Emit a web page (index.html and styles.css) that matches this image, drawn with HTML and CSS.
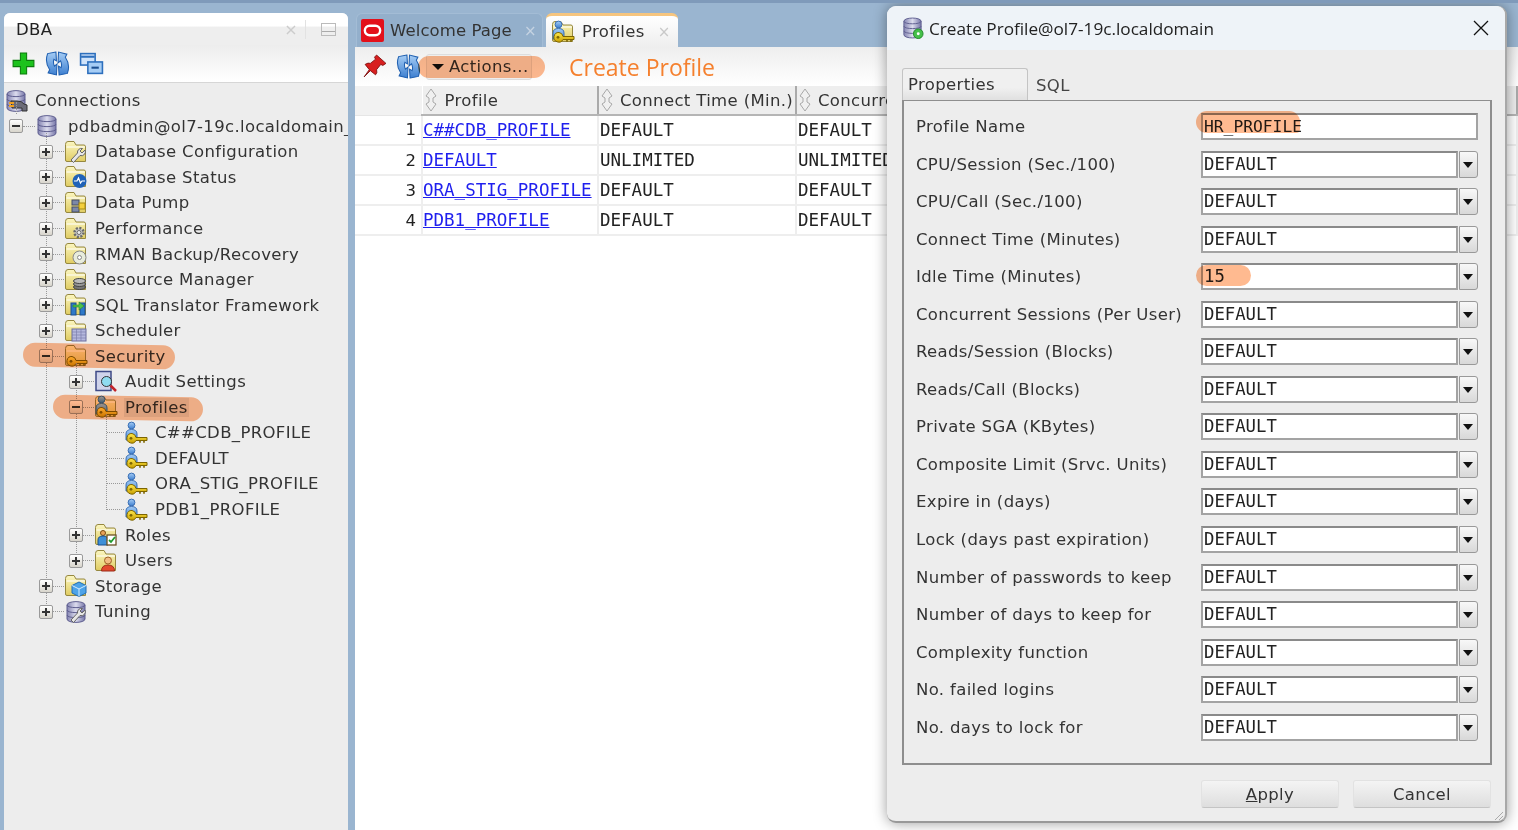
FILE: index.html
```html
<!DOCTYPE html>
<html lang="en">
<head>
    <meta charset="UTF-8">
    <meta name="viewport" content="width=device-width, initial-scale=1.0">
    <title>Create Profile</title>
    <link rel="stylesheet" href="styles.css">
</head>
<body>
    <svg class="defs" aria-hidden="true">
        <defs>
            <linearGradient id="g-folder" x1="0" y1="0" x2="0" y2="1"><stop offset="0" stop-color="#fbf6c0"/><stop offset="1" stop-color="#e0cc62"/></linearGradient>
            <linearGradient id="g-db" x1="0" y1="0" x2="1" y2="0"><stop offset="0" stop-color="#8484b2"/><stop offset=".5" stop-color="#dcdcee"/><stop offset="1" stop-color="#7676a8"/></linearGradient>
            <linearGradient id="g-blue" x1="0" y1="0" x2="0" y2="1"><stop offset="0" stop-color="#a6cdf5"/><stop offset="1" stop-color="#3d7fd0"/></linearGradient>
            <linearGradient id="g-key" x1="0" y1="0" x2="0" y2="1"><stop offset="0" stop-color="#ffe94d"/><stop offset="1" stop-color="#c9a000"/></linearGradient>
            <symbol id="folder" viewBox="0 0 24 24"><path d="M1.500 4.500Q1.500 1.500 4 1.500H10L12 5H20Q21.500 5 21.500 7V21.500H3Q1.500 21.500 1.500 20Z" fill="url(#g-folder)" stroke="#968840"/><path d="M2.500 7H21" stroke="#fff" fill="none"/></symbol>
            <symbol id="key" viewBox="0 0 24 24"><path d="M8 12.500a4.800 4.800 0 1 0 4 7H23v-3H12A4.800 4.800 0 0 0 8 12.500Z" fill="url(#g-key)" stroke="#7d6500"/><circle cx="7" cy="17.300" r="1.400" fill="#7d6500"/><path d="M16 19.500v2.300M20 19.500v2.300" stroke="#7d6500" stroke-width="1.600"/></symbol>
            <symbol id="person" viewBox="0 0 24 24"><circle cx="7.500" cy="4.500" r="3.400" fill="url(#g-blue)" stroke="#3a6fb5"/><path d="M2 19V13Q2 8.500 7.500 8.500T13 13V19Z" fill="url(#g-blue)" stroke="#3a6fb5"/></symbol>
            <symbol id="db" viewBox="0 0 24 24"><path d="M3 5C3 .5 21 .5 21 5V19C21 23.500 3 23.500 3 19Z" fill="url(#g-db)" stroke="#5f5f90"/><path d="M3 5C3 8.500 21 8.500 21 5M3 10C3 13.500 21 13.500 21 10M3 15C3 18.500 21 18.500 21 15" fill="none" stroke="#5f5f90"/></symbol>
            <symbol id="plug" viewBox="0 0 24 24"><path d="M7 12h6q5 0 7 3l3 1v6h-5v-3H8Z" fill="#6b6b78" stroke="#333"/><path d="M5 14h5M5 17h5" stroke="#f0a020" stroke-width="2"/></symbol>
            <symbol id="wrench" viewBox="0 0 24 24"><path d="M21 10l-3 3-2-2 2.500-2.500A4 4 0 0 0 13.500 13L7 20l2.500 2.500 6.500-7A4 4 0 0 0 21 10Z" fill="#e6e6e6" stroke="#666"/></symbol>
            <symbol id="pulse" viewBox="0 0 24 24"><circle cx="15.500" cy="16" r="7" fill="#1f62b8"/><path d="M10 16h3l1.500-3 2 5 1.500-2h3" fill="none" stroke="#fff" stroke-width="1.200"/></symbol>
            <symbol id="pump" viewBox="0 0 24 24"><rect x="8" y="9" width="7" height="5" fill="#7c88a8" stroke="#444c66"/><rect x="8" y="16" width="7" height="5" fill="#7c88a8" stroke="#444c66"/><rect x="15" y="12" width="6" height="6" fill="#f4cf3c" stroke="#a88a12"/></symbol>
            <symbol id="gear" viewBox="0 0 24 24"><circle cx="15" cy="15.500" r="4.500" fill="#c9c9c9" stroke="#6a6a6a" stroke-width="2.500" stroke-dasharray="2 1.500"/><circle cx="15" cy="15.500" r="2" fill="#eee" stroke="#6a6a6a"/></symbol>
            <symbol id="disc" viewBox="0 0 24 24"><circle cx="15.500" cy="15.500" r="6.500" fill="#e8ecdc" stroke="#888"/><circle cx="15.500" cy="15.500" r="2" fill="#fff" stroke="#888"/></symbol>
            <symbol id="stack" viewBox="0 0 24 24"><ellipse cx="15.500" cy="19" rx="6" ry="2.500" fill="#777" stroke="#444"/><ellipse cx="15.500" cy="16" rx="6" ry="2.500" fill="#999" stroke="#444"/><ellipse cx="15.500" cy="13" rx="6" ry="2.500" fill="#bbb" stroke="#444"/></symbol>
            <symbol id="translate" viewBox="0 0 24 24"><rect x="7" y="10" width="5" height="12" fill="#2e79c9" stroke="#1b4f8f"/><rect x="16" y="10" width="5" height="12" fill="#2e79c9" stroke="#1b4f8f"/><path d="M9 12h6V9l5 4-5 4v-3H9Z" fill="#4fc24a" stroke="#2c8a2a" stroke-width=".6"/></symbol>
            <symbol id="calendar" viewBox="0 0 24 24"><rect x="8" y="10" width="14" height="12" fill="#b5b8de" stroke="#6c6f9e"/><path d="M8 13h14M8 16h14M8 19h14M12.500 10v12M17 10v12" stroke="#7d80ad" stroke-width=".7"/></symbol>
            <symbol id="audit" viewBox="0 0 24 24"><rect x="2" y="1.500" width="15" height="19" fill="#cfd3ea" stroke="#3e4a86" stroke-width="1.500"/><circle cx="12.500" cy="11.500" r="5" fill="#8fdcf0" stroke="#333"/><path d="M16.500 15.500l5.500 5.500" stroke="#c3242a" stroke-width="2.500"/></symbol>
            <symbol id="roles" viewBox="0 0 24 24"><circle cx="9" cy="10" r="2.500" fill="#e8a35a" stroke="#7c4a12"/><path d="M4 22v-5q0-4 5-4t5 4v5Z" fill="#3d8fd8" stroke="#1b4f8f"/><rect x="13" y="12" width="9" height="10" fill="#fff" stroke="#6b5224" stroke-width="1.300"/><path d="M15 17l2 2 4-5" fill="none" stroke="#1f9a2c" stroke-width="1.800"/></symbol>
            <symbol id="user" viewBox="0 0 24 24"><circle cx="14" cy="11.500" r="3.500" fill="#f2bd84" stroke="#a0622a"/><path d="M7.500 22q0-6 6.500-6t6.500 6Z" fill="#e2492f" stroke="#9c2b16"/></symbol>
            <symbol id="cube" viewBox="0 0 24 24"><path d="M15 8l7 3.500V19l-7 3.500L8 19v-7.500Z" fill="#4da3e8" stroke="#1f6cb5"/><path d="M8 11.500l7 3.500 7-3.500M15 15v7.500" fill="none" stroke="#d4ecff"/></symbol>
            <symbol id="refresh" viewBox="0 0 24 24"><path d="M10.500 1L2.500 2.500Q-.5 11 4.500 18L3 21L11 23L11.500 12.500L9 14.500Q7.500 11 8.500 8L11 9.500Z" fill="url(#g-blue)" stroke="#1f5fb0"/><path d="M13.500 23L21.500 21.500Q24.500 13 19.500 6L21 3L13 1L12.500 11.500L15 9.500Q16.500 13 15.500 16L13 14.500Z" fill="url(#g-blue)" stroke="#1f5fb0"/></symbol>
            <symbol id="sort" viewBox="0 0 12 24"><path d="M6 1L11 8L8 10V14L11 16L6 23L1 16L4 14V10L1 8Z" fill="#f0f0f0" stroke="#a8a8a8"/></symbol>
        </defs>
    </svg>

    <div class="app">
        <aside class="dba">
            <div class="dba-title">
                <span>DBA</span>
                <span class="dba-close">×</span>
                <span class="dba-min"></span>
            </div>
            <div class="dba-tools">
                <svg class="tool" viewBox="0 0 24 24"><path d="M9 2h6v7h7v6h-7v7H9v-7H2V9h7Z" fill="#1cc21c" stroke="#0a7a0a"/></svg>
                <svg class="tool"><use href="#refresh"/></svg>
                <svg class="tool" viewBox="0 0 24 24"><rect x="1.500" y="2.500" width="14" height="11" fill="#cfe3fa" stroke="#2d6fbd" stroke-width="1.500"/><path d="M2 5.500h13" stroke="#2d6fbd" stroke-width="2"/><rect x="8.500" y="10.500" width="14" height="11" fill="#a6cdf5" stroke="#2d6fbd" stroke-width="1.500"/><path d="M12 16h7" stroke="#1b4f8f" stroke-width="2"/></svg>
            </div>
            <div class="tree">
                <div class="row root"><svg class="ico"><use href="#db"/><use href="#plug"/></svg><span class="name">Connections</span></div>
                <div class="branch b-db">
                    <div class="row db-row"><span class="twisty minus"></span><span class="stub"></span><svg class="ico"><use href="#db"/></svg><span class="name">pdbadmin@ol7-19c.localdomain_</span></div>
                    <div class="children">
                        <div class="row"><span class="twisty plus"></span><span class="stub"></span><svg class="ico"><use href="#folder"/><use href="#wrench"/></svg><span class="name">Database Configuration</span></div>
                        <div class="row"><span class="twisty plus"></span><span class="stub"></span><svg class="ico"><use href="#folder"/><use href="#pulse"/></svg><span class="name">Database Status</span></div>
                        <div class="row"><span class="twisty plus"></span><span class="stub"></span><svg class="ico"><use href="#folder"/><use href="#pump"/></svg><span class="name">Data Pump</span></div>
                        <div class="row"><span class="twisty plus"></span><span class="stub"></span><svg class="ico"><use href="#folder"/><use href="#gear"/></svg><span class="name">Performance</span></div>
                        <div class="row"><span class="twisty plus"></span><span class="stub"></span><svg class="ico"><use href="#folder"/><use href="#disc"/></svg><span class="name">RMAN Backup/Recovery</span></div>
                        <div class="row"><span class="twisty plus"></span><span class="stub"></span><svg class="ico"><use href="#folder"/><use href="#stack"/></svg><span class="name">Resource Manager</span></div>
                        <div class="row"><span class="twisty plus"></span><span class="stub"></span><svg class="ico"><use href="#folder"/><use href="#translate"/></svg><span class="name">SQL Translator Framework</span></div>
                        <div class="row"><span class="twisty plus"></span><span class="stub"></span><svg class="ico"><use href="#folder"/><use href="#calendar"/></svg><span class="name">Scheduler</span></div>
                        <div class="row"><span class="mark mark-security"></span><span class="twisty minus"></span><span class="stub"></span><svg class="ico"><use href="#folder"/><use href="#key"/></svg><span class="name">Security</span></div>
                        <div class="children">
                            <div class="row"><span class="twisty plus"></span><span class="stub"></span><svg class="ico"><use href="#audit"/></svg><span class="name">Audit Settings</span></div>
                            <div class="row"><span class="mark mark-profiles"></span><span class="twisty minus"></span><span class="stub"></span><svg class="ico"><use href="#folder"/><use href="#person"/><use href="#key"/></svg><span class="name selected">Profiles</span></div>
                            <div class="children leaves">
                                <div class="row"><span class="stub long"></span><svg class="ico"><use href="#person"/><use href="#key"/></svg><span class="name">C##CDB_PROFILE</span></div>
                                <div class="row"><span class="stub long"></span><svg class="ico"><use href="#person"/><use href="#key"/></svg><span class="name">DEFAULT</span></div>
                                <div class="row"><span class="stub long"></span><svg class="ico"><use href="#person"/><use href="#key"/></svg><span class="name">ORA_STIG_PROFILE</span></div>
                                <div class="row"><span class="stub long"></span><svg class="ico"><use href="#person"/><use href="#key"/></svg><span class="name">PDB1_PROFILE</span></div>
                            </div>
                            <div class="row"><span class="twisty plus"></span><span class="stub"></span><svg class="ico"><use href="#folder"/><use href="#roles"/></svg><span class="name">Roles</span></div>
                            <div class="row"><span class="twisty plus"></span><span class="stub"></span><svg class="ico"><use href="#folder"/><use href="#user"/></svg><span class="name">Users</span></div>
                        </div>
                        <div class="row"><span class="twisty plus"></span><span class="stub"></span><svg class="ico"><use href="#folder"/><use href="#cube"/></svg><span class="name">Storage</span></div>
                        <div class="row"><span class="twisty plus"></span><span class="stub"></span><svg class="ico"><use href="#db"/><use href="#wrench"/></svg><span class="name">Tuning</span></div>
                    </div>
                </div>
            </div>
        </aside>

        <main class="editor">
            <div class="tabs">
                <div class="tab">
                    <svg class="tab-logo" viewBox="0 0 24 24"><rect width="24" height="24" rx="2" fill="#e3101a"/><rect x="4" y="7" width="16" height="10" rx="5" fill="none" stroke="#fff" stroke-width="2.500"/></svg>
                    <span class="tab-name">Welcome Page</span><span class="tab-x">×</span>
                </div>
                <div class="tab active">
                    <svg class="ico"><use href="#folder"/><use href="#person"/><use href="#key"/></svg>
                    <span>Profiles</span><span class="tab-x">×</span>
                </div>
            </div>
            <div class="sheet">
                <div class="sheet-tools">
                    <svg class="tool pin" viewBox="0 0 24 24"><path d="M14 1l9 8-3 2-2-1-4 5q1 3-1 5l-5-4-6 6 5-7-4-5q3-2 5-1l5-4-1-2Z" fill="#d81f1f" stroke="#7a0c0c" stroke-width=".8"/></svg>
                    <svg class="tool"><use href="#refresh"/></svg>
                    <button class="actions"><span class="arrow"></span>Actions...</button>
                    <span class="mark mark-actions"></span>
                    <span class="sheet-title">Create Profile</span>
                </div>
                <table class="grid">
                    <thead>
                        <tr>
                            <th class="num"></th>
                            <th class="c1"><svg class="sort"><use href="#sort"/></svg>Profile</th>
                            <th class="c2"><svg class="sort"><use href="#sort"/></svg>Connect Time (Min.)</th>
                            <th class="c3"><svg class="sort"><use href="#sort"/></svg>Concurrent</th>
                        </tr>
                    </thead>
                    <tbody>
                        <tr><td class="num">1</td><td><a href="#">C##CDB_PROFILE</a></td><td>DEFAULT</td><td>DEFAULT</td></tr>
                        <tr><td class="num">2</td><td><a href="#">DEFAULT</a></td><td>UNLIMITED</td><td>UNLIMITED</td></tr>
                        <tr><td class="num">3</td><td><a href="#">ORA_STIG_PROFILE</a></td><td>DEFAULT</td><td>DEFAULT</td></tr>
                        <tr><td class="num">4</td><td><a href="#">PDB1_PROFILE</a></td><td>DEFAULT</td><td>DEFAULT</td></tr>
                    </tbody>
                </table>
            </div>
        </main>
    </div>

    <section class="dialog">
        <header class="dialog-head">
            <svg class="dialog-ico" viewBox="0 0 24 24"><use href="#db"/><circle cx="18" cy="18" r="5" fill="#45c04a" stroke="#238a2a"/><circle cx="18" cy="18" r="1.500" fill="#fff"/></svg>
            <span class="dialog-title">Create Profile@ol7-19c.localdomain</span>
            <svg class="dialog-close" viewBox="0 0 16 16"><path d="M1 1l14 14M15 1L1 15" stroke="#111" stroke-width="1.300" fill="none"/></svg>
        </header>
        <div class="dialog-tabs">
            <div class="dtab active">Properties</div>
            <div class="dtab">SQL</div>
        </div>
        <form class="pane">
            <div class="field"><label>Profile Name</label><div class="text"><span class="mark mark-name"></span>HR_PROFILE</div></div>
            <div class="field"><label>CPU/Session (Sec./100)</label><div class="combo"><span class="value">DEFAULT</span><span class="drop"></span></div></div>
            <div class="field"><label>CPU/Call (Sec./100)</label><div class="combo"><span class="value">DEFAULT</span><span class="drop"></span></div></div>
            <div class="field"><label>Connect Time (Minutes)</label><div class="combo"><span class="value">DEFAULT</span><span class="drop"></span></div></div>
            <div class="field"><label>Idle Time (Minutes)</label><div class="combo"><span class="mark mark-idle"></span><span class="value">15</span><span class="drop"></span></div></div>
            <div class="field"><label>Concurrent Sessions (Per User)</label><div class="combo"><span class="value">DEFAULT</span><span class="drop"></span></div></div>
            <div class="field"><label>Reads/Session (Blocks)</label><div class="combo"><span class="value">DEFAULT</span><span class="drop"></span></div></div>
            <div class="field"><label>Reads/Call (Blocks)</label><div class="combo"><span class="value">DEFAULT</span><span class="drop"></span></div></div>
            <div class="field"><label>Private SGA (KBytes)</label><div class="combo"><span class="value">DEFAULT</span><span class="drop"></span></div></div>
            <div class="field"><label>Composite Limit (Srvc. Units)</label><div class="combo"><span class="value">DEFAULT</span><span class="drop"></span></div></div>
            <div class="field"><label>Expire in (days)</label><div class="combo"><span class="value">DEFAULT</span><span class="drop"></span></div></div>
            <div class="field"><label>Lock (days past expiration)</label><div class="combo"><span class="value">DEFAULT</span><span class="drop"></span></div></div>
            <div class="field"><label>Number of passwords to keep</label><div class="combo"><span class="value">DEFAULT</span><span class="drop"></span></div></div>
            <div class="field"><label>Number of days to keep for</label><div class="combo"><span class="value">DEFAULT</span><span class="drop"></span></div></div>
            <div class="field"><label>Complexity function</label><div class="combo"><span class="value">DEFAULT</span><span class="drop"></span></div></div>
            <div class="field"><label>No. failed logins</label><div class="combo"><span class="value">DEFAULT</span><span class="drop"></span></div></div>
            <div class="field"><label>No. days to lock for</label><div class="combo"><span class="value">DEFAULT</span><span class="drop"></span></div></div>
        </form>
        <footer class="dialog-foot">
            <button class="btn"><u>A</u>pply</button>
            <button class="btn">Cancel</button>
        </footer>
        <svg class="grip" viewBox="0 0 12 12"><path d="M11 3L3 11M11 7l-4 4" stroke="#aaa" fill="none"/></svg>
    </section>
</body>
</html>
```

FILE: styles.css
```css
* {
    margin: 0;
    padding: 0;
    box-sizing: border-box;
}

body {
    width: 1518px;
    height: 830px;
    overflow: hidden;
    position: relative;
    background: #9ab5d0;
    border-top: 3px solid #7f9aba;
    font-family: 'DejaVu Sans', sans-serif;
    font-size: 16.5px;
    letter-spacing: 0.35px;
    color: #333;
}

.defs {
    position: absolute;
    width: 0;
    height: 0;
}

.app {
    display: flex;
    height: 827px;
    padding: 10px 0 0 4px;
    gap: 7px;
}

/* left panel */
.dba {
    width: 344px;
    flex-shrink: 0;
    background: #ededed;
    border-radius: 6px 6px 0 0;
}

.dba-title {
    height: 32px;
    display: flex;
    align-items: center;
    padding: 0 12px 0 12px;
    background: linear-gradient(#fff 0, #fff 40%, #eee 45%);
    border-radius: 6px 6px 0 0;
    color: #222;
}

.dba-close {
    margin-left: auto;
    color: #ccc;
    font-size: 16px;
    padding-right: 7px;
    border-right: 1px solid #e2e2e2;
}

.dba-min {
    width: 15px;
    height: 13px;
    margin-left: 15px;
    border: 1px solid #bbb;
    background: linear-gradient(transparent 60%, #aaa 60%, #aaa 70%, transparent 70%);
}

.dba-tools {
    height: 38px;
    display: flex;
    align-items: center;
    gap: 9px;
    padding: 0 0 0 7px;
    background: linear-gradient(#ededed, #fff);
    border-bottom: 1px solid #d6d6d6;
}

.tool {
    width: 25px;
    height: 25px;
    flex-shrink: 0;
}

.tree {
    padding-top: 5px;
}

.row {
    height: 25.55px;
    display: flex;
    align-items: center;
    position: relative;
    white-space: nowrap;
    padding-left: 5px;
}

.root {
    padding-left: 0;
}

.ico {
    width: 24px;
    height: 24px;
    flex-shrink: 0;
}

.name {
    margin-left: 6px;
    padding: 0 1px;
    position: relative;
}

.root .name {
    margin-left: 6px;
}

.db-row .name {
    margin-left: 8px;
    overflow: hidden;
    width: 281px;
}

.selected {
    background: #dcdcdc;
}

.twisty {
    width: 14px;
    height: 14px;
    flex-shrink: 0;
    position: relative;
    border: 1px solid #9a9a9a;
    border-radius: 2px;
    background: linear-gradient(#fff, #d8d5cc);
}

.twisty::before {
    content: "";
    position: absolute;
    left: 2px;
    right: 2px;
    top: 5px;
    height: 2px;
    background: #333;
}

.plus::after {
    content: "";
    position: absolute;
    top: 2px;
    bottom: 2px;
    left: 5px;
    width: 2px;
    background: #333;
}

.stub {
    width: 11px;
    flex-shrink: 0;
    border-top: 1px dotted #999;
}

.db-row .stub {
    width: 12px;
}

.stub.long {
    width: 17px;
}

.branch {
    position: relative;
}

.b-db::before {
    content: "";
    position: absolute;
    left: 12px;
    top: -12px;
    height: 12px;
    border-left: 1px dotted #999;
}

.children {
    margin-left: 30px;
    position: relative;
}

.children::before {
    content: "";
    position: absolute;
    left: 12px;
    top: -6px;
    bottom: 12px;
    border-left: 1px dotted #999;
}

.leaves {
    margin-left: 30px;
}

.leaves .row {
    padding-left: 13px;
}

.leaves::before {
    left: 12px;
}

/* orange highlighter strokes */
.mark {
    position: absolute;
    background: #ffba90;
    mix-blend-mode: multiply;
    border-radius: 12px;
    z-index: 2;
}

.mark-security {
    left: -11px;
    top: 1px;
    width: 152px;
    height: 24px;
    transform: rotate(1.2deg);
}

.mark-profiles {
    left: -11px;
    top: 1px;
    width: 150px;
    height: 24px;
    transform: rotate(1.2deg);
}

.mark-actions {
    left: 63px;
    top: 9px;
    width: 127px;
    height: 22px;
}

.mark-name {
    left: -7px;
    top: -4px;
    width: 104px;
    height: 22px;
    border-radius: 11px 11px 4px 11px;
}

.mark-idle {
    left: -5px;
    top: 2px;
    width: 55px;
    height: 21px;
}

/* profiles editor */
.editor {
    flex: 1;
    display: flex;
    flex-direction: column;
    min-width: 0;
}

.tabs {
    height: 34px;
    display: flex;
    gap: 3px;
    padding-left: 1px;
}

.tab {
    width: 187px;
    display: flex;
    align-items: center;
    gap: 6px;
    padding: 0 6px 0 4px;
    white-space: nowrap;
    background: #93afcb;
    border-radius: 6px 6px 0 0;
    border: 1px solid #a3bcd5;
    border-bottom: none;
}

.tab.active {
    width: 132px;
    background: linear-gradient(#fff, #eee);
    border: none;
    border-top: 3px solid #f6c57e;
    padding-left: 5px;
    gap: 7px;
}

.tab-name {
    letter-spacing: 0.1px;
}

.tab-logo {
    width: 23px;
    height: 23px;
    flex-shrink: 0;
}

.tab-x {
    color: #c5d3e2;
    margin-left: 6px;
    font-size: 15px;
}

.tab.active .tab-x {
    color: #c9c9c9;
    margin-left: 6px;
}

.sheet {
    flex: 1;
    background: #fff;
    display: flex;
    flex-direction: column;
}

.sheet-tools {
    height: 39px;
    display: flex;
    align-items: center;
    position: relative;
    padding-left: 7px;
    background: linear-gradient(#eee, #fff);
}

.pin {
    margin-right: 9px;
}

.actions {
    width: 106px;
    height: 26px;
    margin-left: 5px;
    display: flex;
    align-items: center;
    gap: 5px;
    padding-left: 5px;
    font: inherit;
    letter-spacing: inherit;
    color: #333;
    background: #eee;
    border: 1px solid #ddd;
    border-radius: 3px;
}

.arrow {
    border: 6px solid transparent;
    border-top: 6px solid #111;
    border-bottom: none;
}

.sheet-title {
    margin-left: 37px;
    font-family: 'Open Sans', sans-serif;
    font-size: 23px;
    letter-spacing: 0;
    color: #f5802e;
}

.grid {
    width: 1163px;
    table-layout: fixed;
    border-collapse: collapse;
}

.grid th {
    height: 29px;
    padding-top: 2px;
    font-weight: normal;
    text-align: left;
    white-space: nowrap;
    overflow: hidden;
    background: #eee;
    border-bottom: 2px solid #b5b5b5;
    border-right: 2px solid #aaa;
    border-left: 1px solid #fff;
}

.grid th.num {
    width: 67px;
    background: #f2f2f2;
    border: none;
    border-bottom: 1px solid #e6e6e6;
}

.c1 {
    width: 176px;
}

.c2 {
    width: 198px;
}

.sort {
    display: inline-block;
    vertical-align: middle;
    width: 12px;
    height: 24px;
    margin: 0 7px 2px 2px;
}

.c1 .sort {
    margin-right: 8px;
}

.grid td {
    height: 30px;
    padding-left: 1px;
    font-family: 'DejaVu Sans Mono', monospace;
    font-size: 17.5px;
    letter-spacing: 0;
    color: #222;
    white-space: nowrap;
    overflow: hidden;
    border-bottom: 2px solid #eee;
    border-right: 2px solid #eee;
}

.grid td.num {
    text-align: right;
    padding-right: 5px;
    font-family: 'DejaVu Sans', sans-serif;
    font-size: 16.5px;
}

.grid a {
    margin-left: -1px;
    color: #1f1fee;
}

/* dialog window */
.dialog {
    position: absolute;
    left: 887px;
    top: 3px;
    width: 620px;
    height: 817px;
    background: #ededed;
    border-radius: 9px;
    border-right: 2px solid #a8a8a8;
    border-bottom: 2px solid #999;
    box-shadow: 0 0 14px rgba(0, 0, 0, 0.4);
    display: flex;
    flex-direction: column;
    padding: 0 14px 0 15px;
}

.dialog-head {
    height: 44px;
    margin: 0 -14px 0 -15px;
    padding: 0 16px 0 14px;
    display: flex;
    align-items: center;
    background: #eef3f8;
    border-radius: 9px 9px 0 0;
    color: #222;
}

.dialog-ico {
    width: 23px;
    height: 24px;
}

.dialog-title {
    margin-left: 5px;
    font-family: 'Open Sans', sans-serif;
    font-size: 17.2px;
    letter-spacing: 0;
}

.dialog-close {
    width: 16px;
    height: 16px;
    margin-left: auto;
}

.dialog-tabs {
    display: flex;
    height: 32px;
    margin-top: 18px;
}

.dtab {
    width: 126px;
    padding: 6px 0 0 5px;
    color: #444;
}

.dtab.active {
    border: 1px solid #c4c4c4;
    border-bottom: none;
    border-radius: 3px 3px 0 0;
    background: linear-gradient(#f0f0f0 60%, #e0e0e0);
    color: #333;
}

.dtab + .dtab {
    width: auto;
    padding: 8px 0 0 8px;
}

.pane {
    width: 590px;
    height: 665px;
    border: 2px solid #8e8e8e;
    border-top-width: 1px;
    padding: 12px 12px 0 12px;
    display: flex;
    flex-direction: column;
    gap: 10.56px;
}

.field {
    display: flex;
    align-items: center;
    height: 27px;
    flex-shrink: 0;
}

.field label {
    width: 285px;
    flex-shrink: 0;
    white-space: nowrap;
    color: #333;
}

.text,
.combo {
    flex: 1;
    height: 27px;
    position: relative;
    display: flex;
    align-items: center;
    font-family: 'DejaVu Sans Mono', monospace;
    font-size: 17.3px;
    letter-spacing: 0;
    color: #222;
}

.text {
    padding-left: 1px;
    font-size: 16.3px;
    background: #fff;
    border: 2px solid #a3a3a3;
    border-top-color: #8a8a8a;
}

.combo {
    gap: 1px;
}

.value {
    flex: 1;
    height: 27px;
    line-height: 23px;
    padding-left: 1px;
    background: #fff;
    border: 2px solid #a3a3a3;
    border-top-color: #8a8a8a;
}

.drop {
    width: 19px;
    height: 27px;
    position: relative;
    border: 1px solid #999;
    border-radius: 0 3px 3px 0;
    background: linear-gradient(#f8f8f8, #d8d8d8);
}

.drop::after {
    content: "";
    position: absolute;
    left: 3px;
    top: 10px;
    border: 5.500px solid transparent;
    border-top: 6px solid #111;
    border-bottom: none;
}

.dialog-foot {
    display: flex;
    justify-content: flex-end;
    gap: 14px;
    margin-top: 15px;
}

.btn {
    width: 138px;
    height: 28px;
    font: inherit;
    letter-spacing: inherit;
    color: #333;
    border: 1px solid #e2e2e2;
    border-bottom-color: #c4c4c4;
    border-radius: 3px;
    background: linear-gradient(#f4f4f4, #dedede);
}

.grip {
    position: absolute;
    right: 1px;
    bottom: 0;
    width: 12px;
    height: 12px;
}
```
